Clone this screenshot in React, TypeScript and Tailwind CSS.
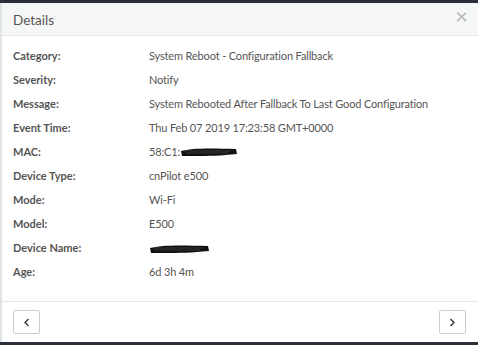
import React from 'react';
import { FaChevronLeft, FaChevronRight } from 'react-icons/fa';

const Scribble: React.FC<{ width: number }> = ({ width }) => (
  <svg width={width} height="10" viewBox={`0 0 ${width} 10`} className="inline-block align-middle">
    <path
      d={`M1 4 C ${width * 0.2} 1, ${width * 0.5} 1, ${width - 2} 2 L ${width - 1} 7 C ${width * 0.6} 9.5, ${width * 0.3} 9, 2 9 Z`}
      fill="#111"
    />
    <path d={`M4 4 L ${width - 8} 4 M6 6 L ${width - 10} 6`} stroke="#555" strokeWidth="0.6" />
  </svg>
);

const App: React.FC = () => {
  const rows: { label: string; value: React.ReactNode }[] = [
    { label: 'Category:', value: 'System Reboot - Configuration Fallback' },
    { label: 'Severity:', value: 'Notify' },
    { label: 'Message:', value: 'System Rebooted After Fallback To Last Good Configuration' },
    { label: 'Event Time:', value: 'Thu Feb 07 2019 17:23:58 GMT+0000' },
    {
      label: 'MAC:',
      value: (
        <span className="flex items-center">
          58:C1:
          <Scribble width={58} />
        </span>
      ),
    },
    { label: 'Device Type:', value: 'cnPilot e500' },
    { label: 'Mode:', value: 'Wi-Fi' },
    { label: 'Model:', value: 'E500' },
    { label: 'Device Name:', value: <Scribble width={61} /> },
    { label: 'Age:', value: '6d 3h 4m' },
  ];

  return (
    <div
      className="w-[478px] h-[345px] bg-[#2a3038] flex flex-col pt-[3px] pb-[3px] overflow-hidden"
      style={{ fontFamily: 'Lato, "Open Sans", sans-serif' }}
    >
      <div className="flex-1 bg-white border-l-2 border-[#dfe3e6] flex flex-col">
        {/* Header */}
        <div className="h-[33px] bg-[#f5f7f7] border-b border-[#e5e7e8] flex items-center justify-between pl-[11px] pr-[10px]">
          <span className="text-[13.5px] text-[#555] mt-[3px]">Details</span>
          <span className="text-[#b8b8b8] text-[22px] leading-none -mt-[6px]">×</span>
        </div>

        {/* Body */}
        <div className="flex-1 pt-[8px] pl-[11px]">
          {rows.map((row) => (
            <div key={row.label} className="h-[24px] flex items-center text-[11px] text-[#555]">
              <div className="w-[136px] font-bold">{row.label}</div>
              <div className="tracking-[-0.15px]">{row.value}</div>
            </div>
          ))}
        </div>

        {/* Footer */}
        <div className="h-[41px] border-t border-[#e5e5e5] flex items-center justify-between pl-[11px] pr-[12px]">
          <button className="w-[27px] h-[24px] border border-[#cccccc] rounded-[2px] bg-white flex items-center justify-center">
            <FaChevronLeft size={9} color="#333" />
          </button>
          <button className="w-[27px] h-[24px] border border-[#cccccc] rounded-[2px] bg-white flex items-center justify-center">
            <FaChevronRight size={9} color="#333" />
          </button>
        </div>
      </div>
    </div>
  );
};

export default App;
